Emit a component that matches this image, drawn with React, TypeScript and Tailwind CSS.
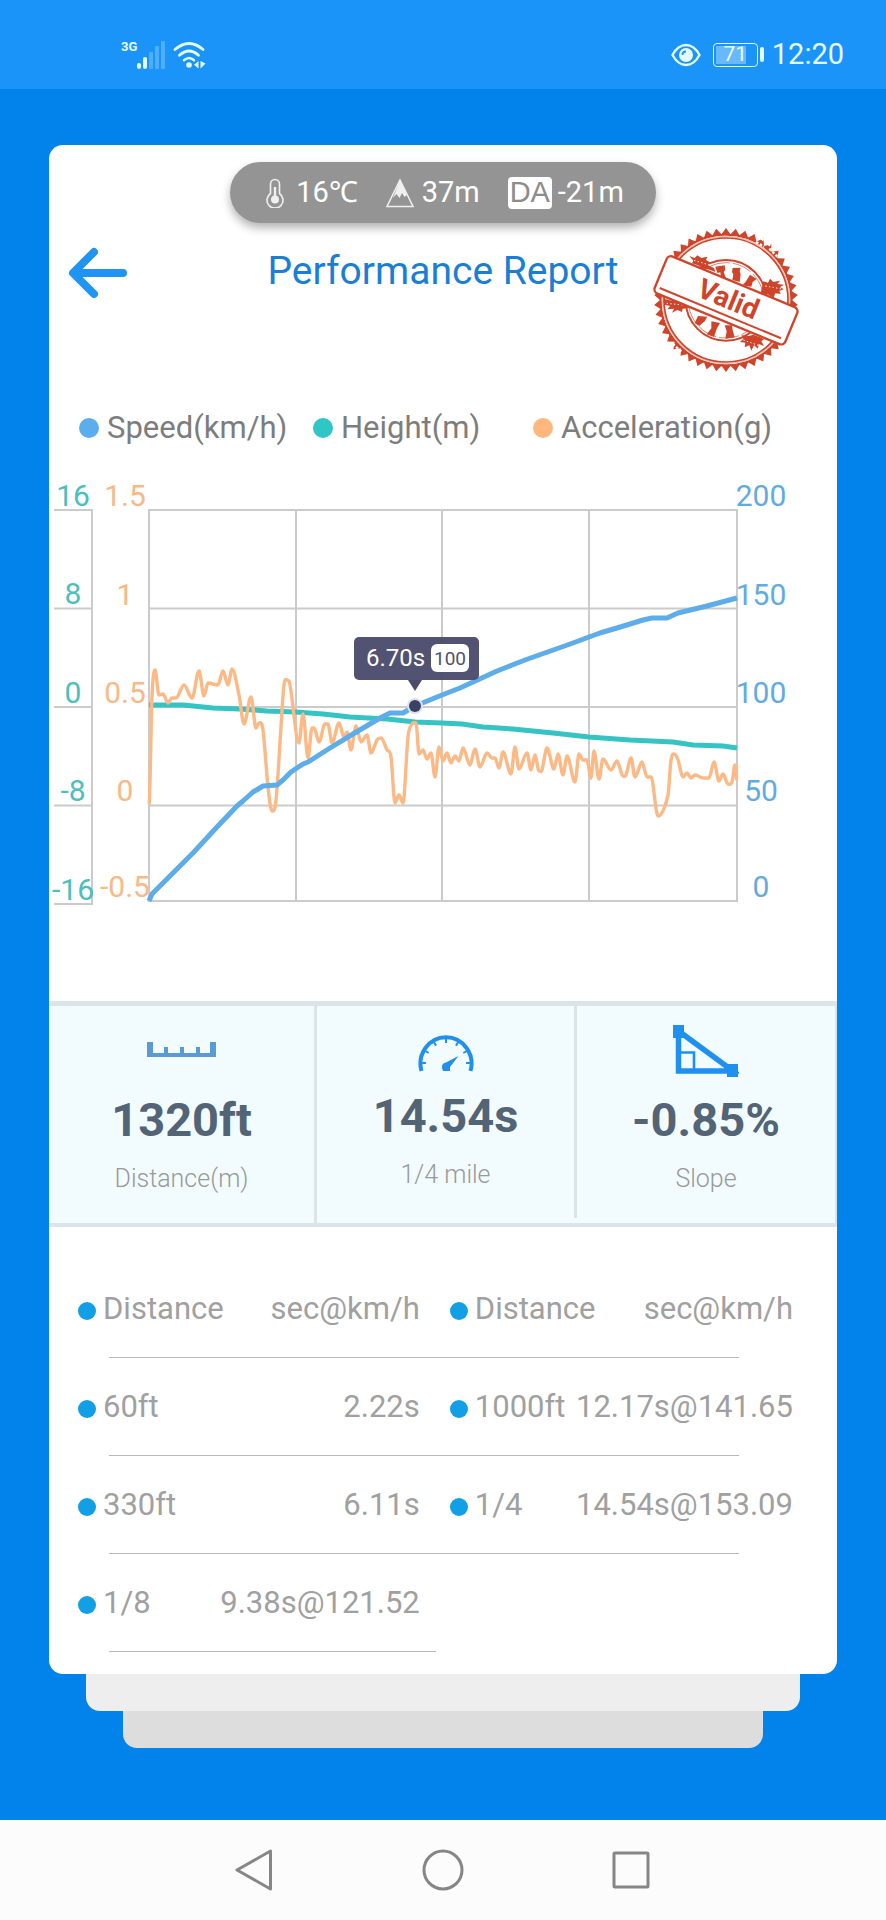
import type { ReactNode } from "react";

type Point = [number, number];

// Chart series, in plot pixels (588 x 391, origin top left)
const speed: Point[] = [
  [0, 391], [3, 384], [24, 363], [44, 343], [68, 317], [88, 296], [94, 291], [104, 282], [114, 276], [128, 275],
  [134, 270], [142, 262], [154, 254], [159, 252], [181, 238], [204, 224], [231, 208], [241, 203], [254, 203],
  [266, 196], [293, 185], [311, 178], [348, 161], [376, 150], [424, 133], [440, 127], [451, 123], [468, 118],
  [481, 114], [494, 110], [503, 108], [518, 108], [529, 103], [558, 96], [588, 88],
];

const height: Point[] = [
  [0, 195], [34, 195], [64, 198], [91, 199], [118, 201], [147, 202], [174, 204], [201, 207], [238, 209], [266, 212],
  [293, 213], [313, 214], [334, 217], [364, 219], [404, 223], [440, 227], [481, 230], [524, 232], [544, 235],
  [574, 236], [588, 238],
];

const acceleration: Point[] = [
  [0, 295], [3, 187], [6, 160], [10, 185], [14, 184], [19, 193], [23, 188], [27, 188], [35, 175], [43, 188],
  [50, 161], [55, 186], [59, 173], [69, 175], [74, 161], [79, 175], [83, 159], [90, 185], [95, 214], [102, 187],
  [107, 218], [110, 213], [114, 220], [119, 277], [123, 301], [127, 290], [132, 217], [135, 175], [138, 170],
  [141, 175], [150, 233], [154, 204], [159, 248], [163, 218], [165, 218], [170, 232], [176, 214], [179, 214],
  [183, 233], [190, 213], [195, 227], [198, 222], [202, 240], [207, 216], [212, 232], [218, 225], [222, 243],
  [228, 230], [232, 228], [238, 240], [242, 247], [246, 293], [250, 285], [254, 293], [259, 227], [263, 214],
  [267, 213], [270, 244], [274, 240], [278, 249], [282, 243], [286, 267], [290, 237], [294, 251], [298, 243],
  [302, 253], [306, 246], [310, 251], [314, 238], [321, 255], [326, 239], [331, 257], [338, 243], [343, 248],
  [346, 248], [350, 258], [354, 242], [362, 264], [366, 237], [370, 259], [378, 243], [382, 260], [386, 245],
  [390, 261], [393, 260], [398, 238], [405, 259], [409, 244], [414, 265], [418, 246], [426, 272], [430, 244],
  [434, 250], [438, 250], [442, 268], [445, 241], [450, 269], [454, 249], [462, 260], [468, 251], [474, 266],
  [477, 265], [482, 248], [486, 267], [493, 252], [498, 267], [502, 267], [509, 306], [519, 285], [522, 250],
  [525, 244], [529, 250], [534, 267], [538, 263], [542, 268], [546, 265], [554, 268], [560, 268], [565, 252],
  [570, 271], [574, 264], [579, 274], [583, 272], [586, 255], [588, 270],
];

const axes = [
  { x: -76, color: "#4bbfbc", labels: ["16", "8", "0", "-8", "-16"], baselines: [-4, 94, 193, 291, 390] },
  { x: -24, color: "#f8b887", labels: ["1.5", "1", "0.5", "0", "-0.5"], baselines: [-4, 95, 193, 291, 387] },
  { x: 612, color: "#62abe1", labels: ["200", "150", "100", "50", "0"], baselines: [-4, 95, 193, 291, 387] },
];

const legend = [
  { label: "Speed(km/h)", color: "bg-[#5baeee]" },
  { label: "Height(m)", color: "bg-[#2fc6c6]" },
  { label: "Acceleration(g)", color: "bg-[#ffb77d]" },
];

const splits = [
  ["60ft", "2.22s", "1000ft", "12.17s@141.65"],
  ["330ft", "6.11s", "1/4", "14.54s@153.09"],
  ["1/8", "9.38s@121.52"],
];

const toLine = (points: Point[]) => "M" + points.map((p) => p.join(" ")).join("L");

// Cubic path with flat tangents at the peaks
const toCurve = (points: Point[]) => {
  const slopes = points.map((p, i) => {
    const prev = points[i - 1];
    const next = points[i + 1];
    if (!prev || !next || (p[1] - prev[1]) * (next[1] - p[1]) <= 0) return 0;
    return (next[1] - prev[1]) / (next[0] - prev[0]);
  });
  let d = `M${points[0][0]} ${points[0][1]}`;
  for (let i = 1; i < points.length; i++) {
    const [x0, y0] = points[i - 1];
    const [x1, y1] = points[i];
    const h = (x1 - x0) / 3;
    d += `C${x0 + h} ${y0 + slopes[i - 1] * h} ${x1 - h} ${y1 - slopes[i] * h} ${x1} ${y1}`;
  }
  return d;
};

const StatusBar = () => (
  <header className="flex h-[89px] items-center justify-between bg-[#1a94f8] pt-5 pl-[121px] pr-[42px] text-[#e4fbff]">
    <div className="flex items-center">
      <span className="mb-4 text-[13px] font-bold leading-none">3G</span>
      <svg className="h-7 w-7" viewBox="0 0 28 28" fill="currentColor">
        <rect x="0" y="22" width="4" height="6" rx="2" />
        <rect x="6" y="16" width="4" height="12" rx="2" />
        <g opacity="0.25">
          <rect x="12" y="11" width="4" height="17" rx="1" />
          <rect x="18" y="5" width="4" height="23" rx="1" />
          <rect x="24" y="0" width="4" height="28" rx="1" />
        </g>
      </svg>
      <svg className="ml-2 h-7 w-[34px]" viewBox="0 0 34 28" fill="none" stroke="currentColor" strokeLinecap="round">
        <path d="M2 8.5Q16 -3.5 30 8.5" strokeWidth="2.8" />
        <path d="M6.5 14.2Q16 5.8 25.5 14.2" strokeWidth="2.8" />
        <path d="M11 19.2Q16 14.8 21 19.2" strokeWidth="2.6" />
        <circle cx="16" cy="24" r="2.8" fill="currentColor" stroke="none" />
        <path d="M25.5 20v7.5l-4.5-3.8zM27.5 20v7.5l5-5z" fill="currentColor" stroke="none" />
      </svg>
    </div>
    <div className="flex items-center">
      <svg className="h-6 w-[30px]" viewBox="0 0 30 24" fill="none" stroke="currentColor">
        <path d="M1.5 12C5 5.5 9.5 2 15 2s10 3.500 13.5 10C25 18.5 20.5 22 15 22S5 18.5 1.5 12z" strokeWidth="2.4" />
        <circle cx="15" cy="12" r="7" fill="currentColor" stroke="none" />
        <path d="M11.5 12q0-3.5 3.5-3.5" stroke="#1a94f8" strokeWidth="1.8" />
      </svg>
      <div className="relative ml-3 flex h-6 w-[45px] items-center justify-center rounded border border-current">
        <div className="absolute inset-y-[2px] left-[2px] w-[30px] bg-white/35" />
        <span className="relative text-[21px] leading-none">71</span>
      </div>
      <div className="ml-[2px] h-[15px] w-1 rounded-sm bg-current" />
      <span className="ml-2 text-[29px] leading-none">12:20</span>
    </div>
  </header>
);

const WeatherPill = () => (
  <div className="mx-auto flex h-[61px] w-fit items-center rounded-full bg-[#949494] pl-9 pr-8 text-[29px] text-white shadow-[0_5px_10px_rgba(0,0,0,0.3)]">
    <svg className="h-[30px] w-[18px]" viewBox="0 0 18 30" fill="none" stroke="#f0f0f0" strokeWidth="1.6">
      <path d="M4.5 15.5V6a4.5 4.5 0 0 1 9 0v9.5a8 8 0 1 1-9 0z" />
      <circle cx="9" cy="21.5" r="3.2" fill="#f0f0f0" />
      <path d="M9 9v10" strokeWidth="2.4" />
    </svg>
    <span className="ml-3">16℃</span>
    <svg className="ml-7 h-[30px] w-7" viewBox="0 0 28 30" fill="none" stroke="#f0f0f0" strokeWidth="1.5">
      <path d="M14 2L27 28.500H1z" />
      <path d="M14 2l7 15-2.5 2-2.5-4-2.5 5-3-4-3.5 4z" fill="#f0f0f0" stroke="none" />
    </svg>
    <span className="ml-2">37m</span>
    <span className="ml-7 flex h-8 w-11 items-center justify-center rounded bg-white font-['Liberation_Sans',sans-serif] text-[29px] leading-none text-[#8c8c8c]">
      DA
    </span>
    <span className="ml-[6px]">-21m</span>
  </div>
);

const teeth = Array.from({ length: 92 }, (_, i) => {
  const angle = (i * Math.PI) / 46;
  const r = i % 2 ? 216 : 198;
  return `${(222 + r * Math.cos(angle)).toFixed(1)},${(216 + r * Math.sin(angle)).toFixed(1)}`;
}).join(" ");

const ValidStamp = () => (
  <svg className="mt-[5px] h-36 w-[148px]" viewBox="0 0 444 432" role="img" aria-label="Valid">
    <polygon points={teeth} fill="#cf452b" />
    <circle cx="222" cy="216" r="195" fill="#fff" />
    <circle cx="222" cy="216" r="196" fill="none" stroke="#cf452b" strokeWidth="6" />
    <circle cx="222" cy="216" r="190" fill="none" stroke="#f3c0b4" strokeWidth="5" />
    <circle cx="222" cy="216" r="186" fill="none" stroke="#cf452b" strokeWidth="5" />
    {/* worn part of the rim */}
    <path d="M312 42l24 14M352 62l26 26M328 32l28 22M62 348l26 22" stroke="#fff" strokeWidth="7" strokeDasharray="8 5" />
    <circle cx="222" cy="217" r="121" fill="none" stroke="#cf452b" strokeWidth="6" />
    <circle cx="222" cy="217" r="113" fill="none" stroke="#cf452b" strokeWidth="2" strokeDasharray="60 9" />
    <g fill="#cf452b">
      <path d="M190 116l28-4 2 14-5 6 8 22-16-5-2-16-9 2z" />
      <path d="M242 120l24-1-3 11 3 8-3 24-22-6 3-18-4-5z" />
      <path d="M294 140l20 13-12 9-4 14-26-4 10-12z" />
      <path d="M138 264l28 2-8 14-16 14-14-9z" />
      <path d="M178 280l26 5-10 18-8 24-22-8 14-18z" />
      <path d="M218 292h22l2 14 6 22-28 4 4-22z" />
      <path d="M112 84l16 6 8-8 12 8 18-4-4 10 14 8-10 6 20 10 4 12-22-8-16-2-14-10-18-6 4-8z" />
      <path d="M334 160l14 4 6-12 10 10 20-4-8 10 20 2-12 8 12 6-14 4 4 10-16-2-6 14-14-10-24-4z" />
      <path d="M36 212l22 6 16-2 18 8 24 2-12 8 8 6-20 2-2 10-14-6-16 8 6-12-20 2 8-10-16-4z" />
      <path d="M268 322l22 2 14-4 20 8 12 6-8 6 8 14-16-6-2 14-12-10-8 16-6-16-14 6 2-14-16-2 10-10z" />
    </g>
    <path d="M116 94l60 18M44 226l60 6M340 174l56 10M274 336l50 18" stroke="#fff" strokeWidth="3" strokeDasharray="4 7" />
    <g transform="translate(222 217) rotate(22.5)">
      <rect x="-212" y="-60" width="424" height="120" rx="14" fill="#fff" stroke="#cf452b" strokeWidth="7" />
      <path d="M-198 42H196" stroke="#cf452b" strokeWidth="6" />
      <text x="5" y="22" textAnchor="middle" fill="#cf452b" className="text-[84px] font-bold">
        Valid
      </text>
    </g>
  </svg>
);

const Chart = () => (
  <svg className="mt-[26px] mb-[90px] block h-auto w-full" viewBox="0 0 788 440" role="img" aria-label="Speed, height and acceleration over time">
    <g transform="translate(100 39)">
      <g fill="none" stroke="#cbcbcb" strokeWidth="2">
        <path d="M0 0H588V391H0zM0 98.5H588M0 197H588M0 295.5H588M147 0V391M293 0V391M440 0V391" />
        <path d="M-95 0H-57V394H-95M-95 98.5H-57M-95 197H-57M-95 295.5H-57" />
      </g>
      <path d={toLine(height)} fill="none" stroke="#36c3c3" strokeWidth="5" />
      <path d={toCurve(acceleration)} fill="none" stroke="#fcb985" strokeWidth="3.4" strokeLinejoin="round" />
      <path d={toLine(speed)} fill="none" stroke="#5eade8" strokeWidth="5" strokeLinejoin="round" />
      {axes.map((axis) => (
        <g key={axis.x} fill={axis.color} textAnchor="middle" className="text-[30px]">
          {axis.labels.map((label, i) => (
            <text key={label} x={axis.x} y={axis.baselines[i]}>
              {label}
            </text>
          ))}
        </g>
      ))}
      {/* Tooltip */}
      <g>
        <circle cx="266" cy="196" r="8" fill="#dfe0ee" />
        <circle cx="266" cy="196" r="6" fill="#3b4065" />
        <rect x="205" y="127" width="125" height="43" rx="5" fill="#4b4b6c" fillOpacity="0.96" />
        <path d="M259 170h14l-7 11z" fill="#4b4b6c" />
        <text x="217" y="156" fill="#fff" className="text-[24px]">
          6.70s
        </text>
        <rect x="282" y="134" width="38" height="28" rx="6" fill="#fff" />
        <text x="301" y="155" textAnchor="middle" fill="#50506f" className="text-[19px]">
          100
        </text>
      </g>
    </g>
  </svg>
);

const RulerIcon = () => (
  <svg className="h-[52px] w-[70px]" viewBox="0 0 70 52" fill="#5a9bd3">
    <path d="M0 17h6v11h11v-6h4v6h12v-6h4v6h12v-6h4v6h10v-11h6v15H0z" />
  </svg>
);

const GaugeIcon = () => (
  <svg className="h-12 w-14" viewBox="0 0 56 48" fill="none" stroke="#2090ea">
    <path d="M3.5 46A25.5 26.5 0 1 1 52.5 46" strokeWidth="4" />
    {[-90, -60, -30, 0, 30, 60, 90].map((angle) => (
      <path key={angle} d="M28 13v5" strokeWidth="2" transform={`rotate(${angle} 28 38)`} />
    ))}
    <path d="M24 42q0-4 4-4.5L40.500 31 32 42v4h-7q-1-2-1-4z" fill="#2090ea" stroke="none" />
  </svg>
);

const SlopeIcon = () => (
  <svg className="h-[52px] w-[66px]" viewBox="0 0 66 52" fill="none" stroke="#2090f0">
    <path d="M5.5 6v40H60z" strokeWidth="5.5" />
    <path d="M8 27.5h13V44" strokeWidth="2.6" />
    <path d="M0 0h11v13H0zM54 39h11v13H54z" fill="#2090f0" stroke="none" />
  </svg>
);

interface StatProps {
  icon: ReactNode;
  value: string;
  label: string;
  className?: string;
}

const Stat = ({ icon, value, label, className = "" }: StatProps) => (
  <div className={`flex flex-col items-center border-[#dae5e8] pt-[19px] ${className}`}>
    {icon}
    <span className="mt-4 text-[47px] font-bold leading-[54px] text-[#526475]">{value}</span>
    <span className="mt-[18px] text-[25px] font-light leading-7 text-[#999]">{label}</span>
  </div>
);

const Dot = () => <span className="mt-1 size-[18px] shrink-0 rounded-full bg-[#129fe6]" />;

const rowRule =
  "relative h-[98px] after:absolute after:bottom-0 after:left-[31px] after:border-b after:border-[#b9b9b9] after:content-['']";

const SplitsTable = () => (
  <div className="pt-[33px] pr-11 pb-[22px] pl-[29px]">
    <table className="w-full table-fixed whitespace-nowrap text-left text-[31px] text-[#a0a0a0]">
      <colgroup>
        <col className="w-[18%]" />
        <col className="w-[34%]" />
        <col className="w-[17%]" />
        <col className="w-[31%]" />
      </colgroup>
      <thead>
        <tr className={`${rowRule} after:right-[54px]`}>
          {[0, 1].map((half) => [
            <th key={`distance-${half}`} className="p-0 font-normal">
              <div className="flex items-center gap-[7px]">
                <Dot />
                Distance
              </div>
            </th>,
            <th key={`time-${half}`} className={half ? "p-0 text-right font-normal" : "p-0 pr-[30px] text-right font-normal"}>
              sec@km/h
            </th>,
          ])}
        </tr>
      </thead>
      <tbody>
        {splits.map(([leftLabel, leftValue, rightLabel, rightValue]) => (
          <tr key={leftLabel} className={`${rowRule} ${rightLabel ? "after:right-[54px]" : "after:right-1/2"}`}>
            <td className="p-0">
              <div className="flex items-center gap-[7px]">
                <Dot />
                {leftLabel}
              </div>
            </td>
            <td className="p-0 pr-[30px] text-right">{leftValue}</td>
            <td className="p-0">
              {rightLabel && (
                <div className="flex items-center gap-[7px]">
                  <Dot />
                  {rightLabel}
                </div>
              )}
            </td>
            <td className="p-0 text-right">{rightValue}</td>
          </tr>
        ))}
      </tbody>
    </table>
  </div>
);

const NavBar = () => (
  <nav className="flex h-[100px] items-center justify-center gap-[146px] bg-[#fcfcfc]">
    <button type="button" aria-label="Back">
      <svg className="size-[42px]" viewBox="0 0 42 42" fill="none" stroke="#868686" strokeWidth="3" strokeLinejoin="round">
        <path d="M36.5 2v38L3 21z" />
      </svg>
    </button>
    <button type="button" aria-label="Home">
      <svg className="size-[42px]" viewBox="0 0 42 42" fill="none" stroke="#868686" strokeWidth="3">
        <circle cx="21" cy="21" r="19" />
      </svg>
    </button>
    <button type="button" aria-label="Recents">
      <svg className="size-[42px]" viewBox="0 0 42 42" fill="none" stroke="#868686" strokeWidth="3">
        <rect x="4" y="4" width="34" height="34" rx="1" />
      </svg>
    </button>
  </nav>
);

const App = () => {
  return (
    <div className="flex min-h-screen flex-col bg-[#0282eb] font-[Roboto,sans-serif]">
      <StatusBar />

      <main className="flex-1 pt-14">
        <section className="mx-[49px] rounded-[14px] bg-white pt-[17px]">
          <WeatherPill />

          {/* Title row */}
          <div className="grid h-[182px] grid-cols-[1fr_auto_1fr] items-start">
            <button type="button" aria-label="Go back" className="mt-6 ml-[19px] w-fit">
              <svg className="h-[52px] w-[60px]" viewBox="0 0 60 52" fill="none" stroke="#2094f3" strokeWidth="8" strokeLinecap="round" strokeLinejoin="round">
                <path d="M26 5L5 26l21 21M6 26h49" />
              </svg>
            </button>
            <h1 className="mt-6 text-[39px] leading-[48px] text-[#1a7fd4]">Performance Report</h1>
            <div className="flex justify-end pr-[37px]">
              <ValidStamp />
            </div>
          </div>

          {/* Legend */}
          <ul className="grid h-10 grid-cols-[234fr_220fr_304fr] items-center pl-[30px] text-[31px] text-[#7d7d7d]">
            {legend.map((item) => (
              <li key={item.label} className="flex items-center gap-2">
                <span className={`size-5 rounded-full ${item.color}`} />
                {item.label}
              </li>
            ))}
          </ul>

          <Chart />

          {/* Key figures */}
          <div className="grid h-[226px] grid-cols-[268fr_260fr_260fr] border-t-[5px] border-b-4 border-[#dae5e8] bg-[#f2fcfe]">
            <Stat icon={<RulerIcon />} value="1320ft" label="Distance(m)" className="border-r-[3px]" />
            <Stat icon={<GaugeIcon />} value="14.54s" label="1/4 mile" className="mb-[5px] border-r-[3px]" />
            <Stat icon={<SlopeIcon />} value="-0.85%" label="Slope" className="border-r-2" />
          </div>

          <SplitsTable />
        </section>

        {/* Stacked cards underneath */}
        <div className="mx-[86px] h-[37px] rounded-b-[14px] bg-[#eee]" />
        <div className="mx-[123px] h-[37px] rounded-b-[14px] bg-[#ddd]" />
      </main>

      <NavBar />
    </div>
  );
};

export default App;
